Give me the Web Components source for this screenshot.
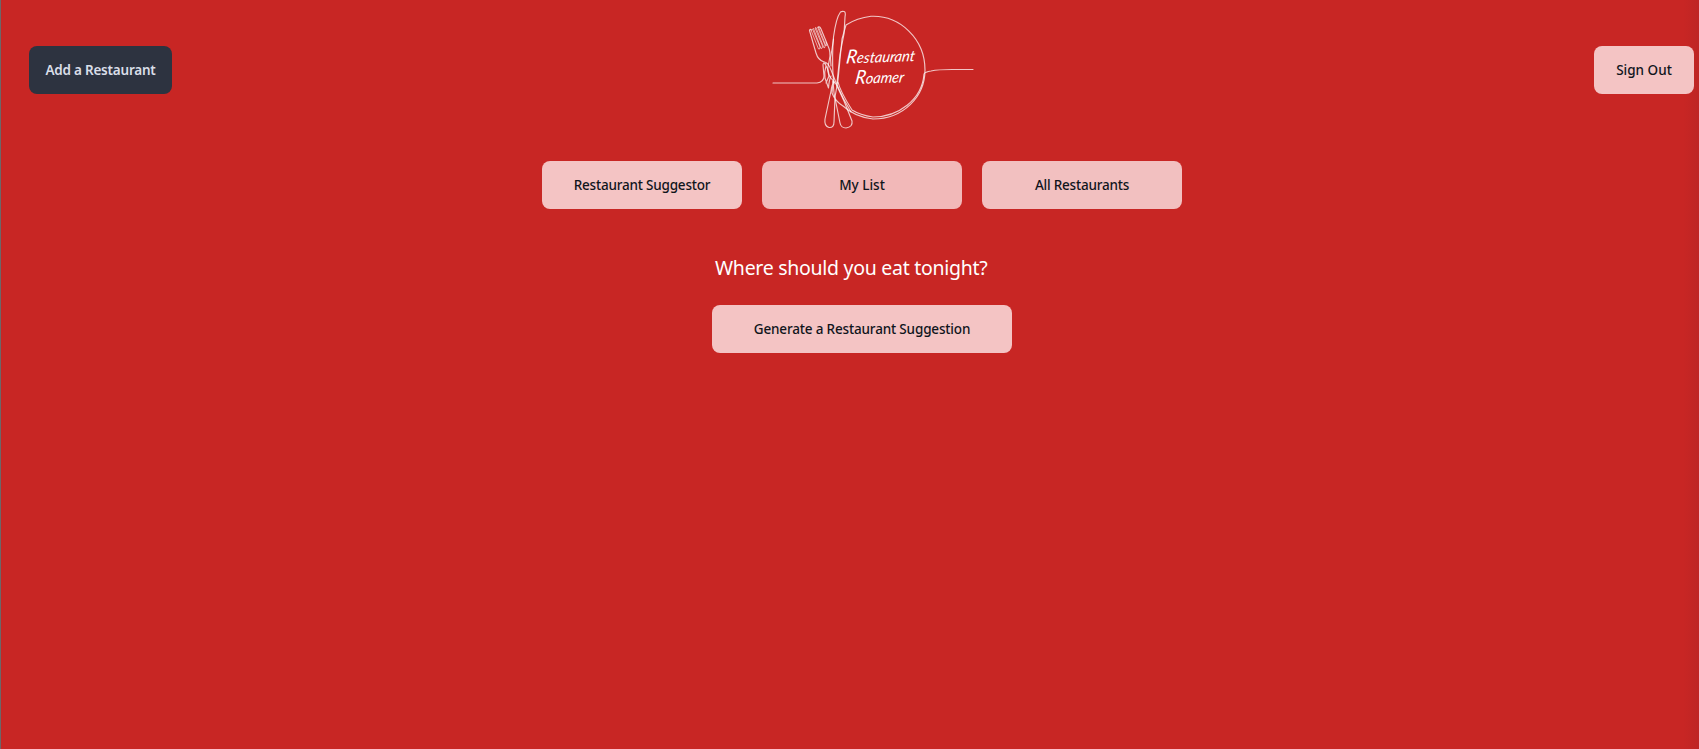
<!DOCTYPE html>
<html lang="en">
<head>
<meta charset="utf-8">
<title>Restaurant Roamer</title>
<style>
html, body { margin: 0; height: 100%; overflow: hidden; background: #c82624; }
body { font-family: "Noto Sans", "Open Sans", sans-serif; }
</style>
</head>
<body>
<roamer-app></roamer-app>
<script>
const define = (name, html) => customElements.define(name, class extends HTMLElement {
  constructor() {
    super();
    this.attachShadow({ mode: "open" }).innerHTML = html;
  }
});

define("roamer-button", `
<style>
:host { display: block; width: 200px; height: 48px; }
button { display: flex; align-items: center; justify-content: center; width: 100%; height: 100%; margin: 0; padding: 0; box-sizing: border-box; border: 0; border-radius: 8px; background: var(--fill, #f4c4c4); color: var(--ink, #10151c); font: var(--weight, 500) 13.5px/20px "Noto Sans", "Open Sans", sans-serif; letter-spacing: var(--track, -0.2px); white-space: nowrap; }
</style>
<button><slot></slot></button>`);

define("roamer-logo", `
<style>
:host { display: block; width: 200px; height: 135px; }
svg { display: block; overflow: visible; }
.line { fill: none; stroke: #fff; stroke-opacity: .74; stroke-width: 1.15; stroke-linecap: round; stroke-linejoin: round; }
.tines { stroke-width: .8; }
text { fill: #fff; font: italic 400 15px "Lato", sans-serif; }
.cap { font-size: 19px; }
</style>
<svg width="200" height="135" viewBox="773 0 200 135" role="img" aria-label="Restaurant Roamer">
<g class="line">
<path d="M773 83H817Q824 82 824 76L823 65Q823 62 826 64"/>
<path d="M824 62Q818 60 816 53L809.5 30.5Q810 28.500 811.500 30"/>
<path class="tines" d="M811 30L818.500 49Q820 50 820 47L812.500 29L813.500 28.500L821 48.500Q822.500 49 822.500 46L815 28L816 27.500L824 48Q825.500 48 825 45L817.500 27L818.500 27L826 46Q827.500 45 826 42"/>
<path d="M818.5 27Q819.500 26 821 29L828 46Q831 52 829.500 59L828 67Q827 72 830 77L836 84L844 101L852 121Q853 127 846 128Q841 128 840 123L834 93L833 81"/>
<path d="M824 62Q828 62 831 70L837 85Q843 99 851 112"/>
<path d="M826 66Q824 72 825 78L828.500 88Q829 80 831 76M825 64Q829 70 829 76L826 83"/>
<path d="M834 84L833 75Q832 54 833.500 37Q836 18 840.500 12Q842 11 844 11.500Q846 12 845 17L844 34L840 54L837 83"/>
<path d="M833.500 39Q832 50 830.500 58L831 66"/>
<path d="M834 82Q832 84 831 91L825 119Q824 126 829 127.500Q834 128 834 122L835 97L838 80L842 39L846 25Q857 18 871 16.300C900 15 925 39 925 70C925 97 903 119 873 119Q855 117 843 106Q835 101 832 93L833 81"/>
<path d="M838 82Q840 91 852 110Q860 115 873 117C898 117 922 100 924 74Q925 72 931 71Q938 69.500 952 69.500H973"/>
</g>
<text transform="translate(845.5 63.5) rotate(-2) skewX(-10)" textLength="69" lengthAdjust="spacingAndGlyphs"><tspan class="cap">R</tspan>estaurant</text>
<text transform="translate(854.5 84) rotate(-2) skewX(-10)" textLength="49" lengthAdjust="spacingAndGlyphs"><tspan class="cap">R</tspan>oamer</text>
</svg>`);

define("roamer-header", `
<style>
:host { display: grid; grid-template-columns: 744px 200px 1fr; height: 135px; padding: 0 5px 0 29px; }
.left, .right { margin-top: 46px; }
.left { width: 143px; --fill: #2d3340; --ink: #d9dee8; --weight: 600; --track: -0.22px; }
.right { width: 100px; justify-self: end; --track: 0; }
</style>
<roamer-button class="left">Add a Restaurant</roamer-button>
<roamer-logo></roamer-logo>
<roamer-button class="right">Sign Out</roamer-button>`);

define("roamer-nav", `
<style>
:host { display: flex; gap: 20px; padding: 26px 0 0 542px; }
.list { --fill: #f2b8b8; --track: 0; }
.all { --fill: #f2c0c0; }
</style>
<roamer-button>Restaurant Suggestor</roamer-button>
<roamer-button class="list">My List</roamer-button>
<roamer-button class="all">All Restaurants</roamer-button>`);

define("roamer-suggest", `
<style>
:host { display: block; padding: 44px 0 0 712px; }
h1 { margin: 0 0 22px 3px; font: 400 19.5px/30px "Noto Sans", "Open Sans", sans-serif; letter-spacing: -0.28px; color: #fff; white-space: nowrap; }
roamer-button { width: 300px; --track: -0.16px; }
</style>
<h1>Where should you eat tonight?</h1>
<roamer-button>Generate a Restaurant Suggestion</roamer-button>`);

define("roamer-app", `
<style>
:host { display: block; box-sizing: border-box; height: 749px; background: linear-gradient(90deg, #6d6668 1px, transparent 1px, transparent calc(100% - 16px), #be2524 100%), #c82624; }
</style>
<roamer-header></roamer-header>
<roamer-nav></roamer-nav>
<roamer-suggest></roamer-suggest>`);
</script>
</body>
</html>
